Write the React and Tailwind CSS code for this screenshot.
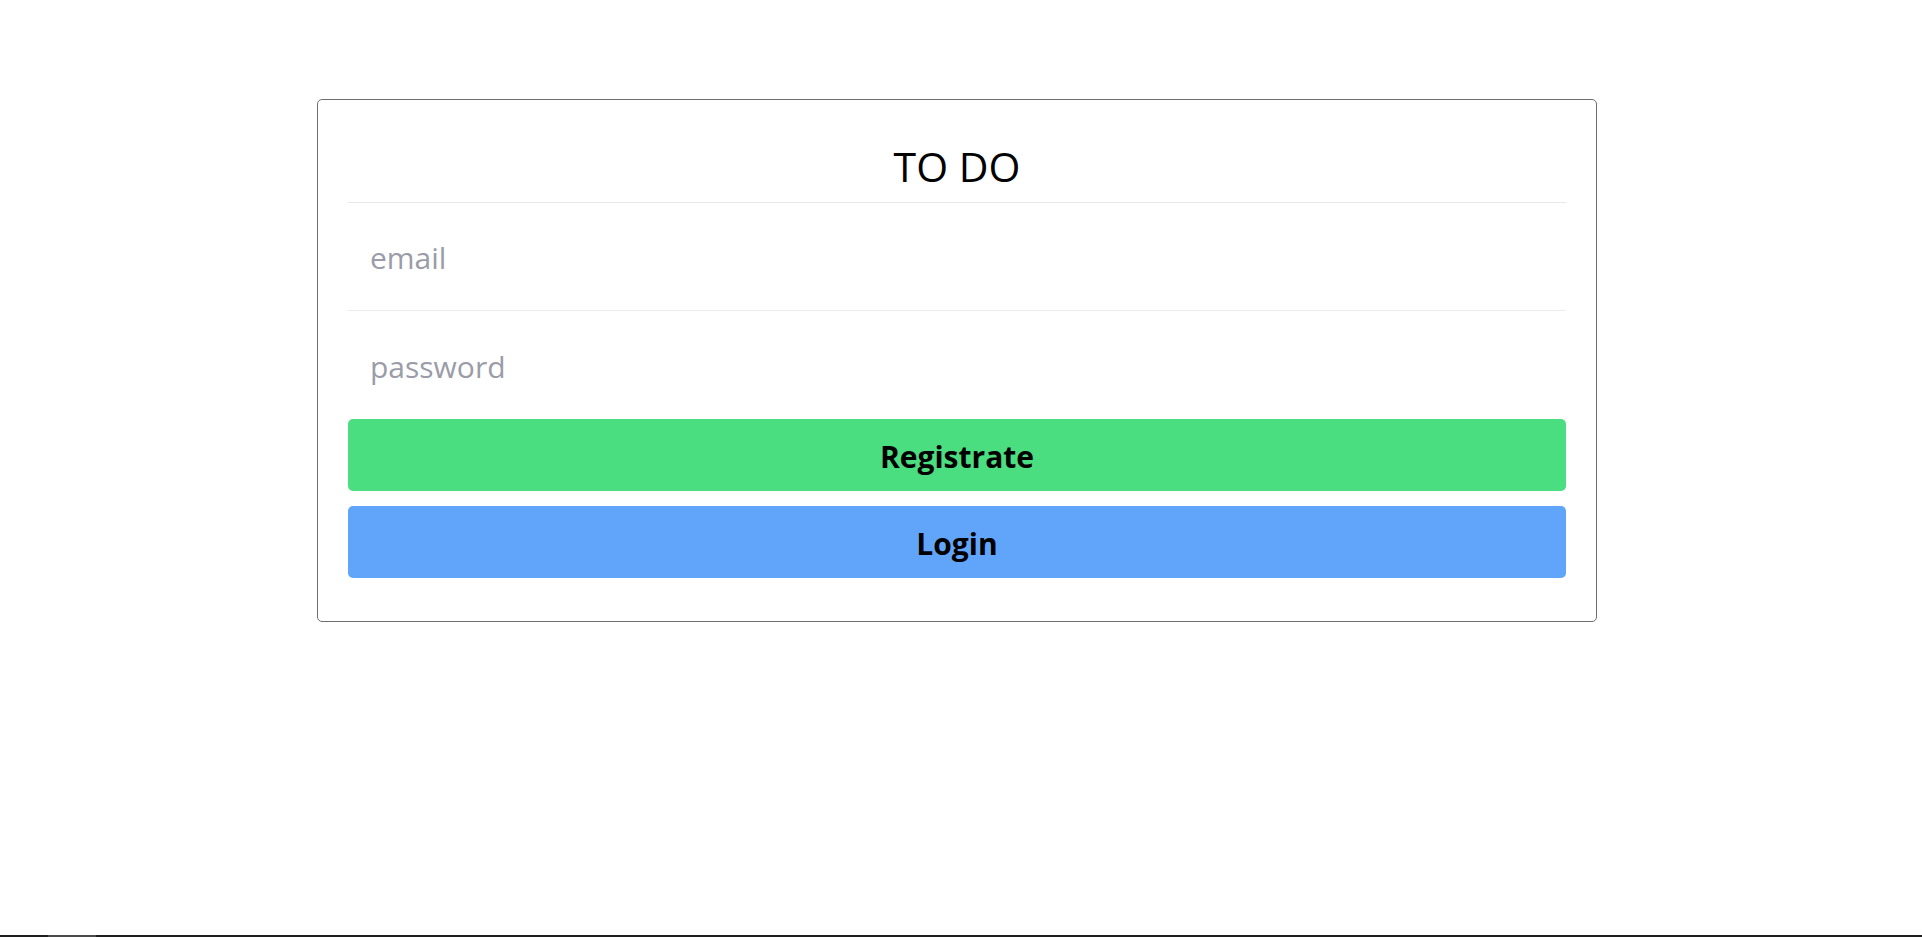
export default function App() {
  return (
    <main className="min-h-screen w-full bg-white pr-2 pt-[99px] font-['Open_Sans',sans-serif]">
      <div className="mx-auto flex w-[1280px] flex-col rounded-[5px] border border-[#6e6e6e] px-[30px] pt-[30px] pb-[43px]">
        <h1 className="border-b border-[#e8e8e8] pt-[11px] pb-[11px] text-center text-[41px] leading-[50px] text-black">
          TO DO
        </h1>
        <input
          type="email"
          placeholder="email"
          className="h-[108px] w-full border-b border-[#ececec] px-[22px] pt-[2px] text-[30px] text-gray-700 outline-none placeholder:text-[#9a9ca8]"
        />
        <input
          type="password"
          placeholder="password"
          className="h-[108px] w-full px-[22px] pt-[2px] text-[30px] text-gray-700 outline-none placeholder:text-[#9a9ca8]"
        />
        <button className="h-[72px] w-full cursor-pointer rounded-[5px] bg-[#4ade80] pt-[2px] text-[30px] font-bold text-black">
          Registrate
        </button>
        <button className="mt-[15px] h-[72px] w-full cursor-pointer rounded-[5px] bg-[#60a5fa] pt-[2px] text-[30px] font-bold text-black">
          Login
        </button>
      </div>

      <div className="fixed bottom-0 left-0 flex h-[2px] w-full bg-[#1e1e1e]">
        <div className="ml-[48px] h-full w-[48px] bg-[#4a4a4a]" />
      </div>
    </main>
  )
}
